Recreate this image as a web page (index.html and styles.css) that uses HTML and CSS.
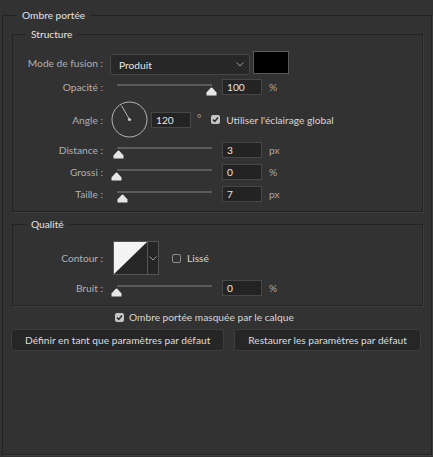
FILE: index.html
```html
<!DOCTYPE html>
<html lang="fr">
<head>
<meta charset="utf-8">
<title>Ombre portée</title>
<link rel="stylesheet" href="styles.css">
</head>
<body>
<fieldset class="group outer">
  <legend>Ombre portée</legend>

  <fieldset class="group sub structure">
    <legend>Structure</legend>

    <div class="row row-mode">
      <span class="label">Mode de fusion :</span>
      <div class="select">
        <span>Produit</span>
        <svg class="chev" width="8" height="5" viewBox="0 0 8 5"><path d="M0.5 0.5 L4 4 L7.5 0.5" fill="none" stroke="#9a9a9a" stroke-width="1"/></svg>
      </div>
      <div class="swatch"></div>
    </div>

    <div class="row row-slider gap4">
      <span class="label">Opacité :</span>
      <div class="slider"><div class="track"></div><svg class="thumb" style="left:100%" width="11" height="9" viewBox="0 0 11 9"><path d="M5.5 0.5 Q6 0.5 6.5 1 L10.5 5.5 L10.5 8.5 L0.5 8.5 L0.5 5.5 L4.5 1 Q5 0.5 5.5 0.5 Z" fill="#e6e6e6"/></svg></div>
      <div class="num">100</div>
      <span class="unit">%</span>
    </div>

    <div class="row row-angle gap6">
      <span class="label">Angle :</span>
      <svg class="dial" width="37" height="37" viewBox="0 0 37 37">
        <circle cx="18.5" cy="18.5" r="17.5" fill="none" stroke="#b4b4b4" stroke-width="1"/>
        <line x1="18.5" y1="18.5" x2="10.5" y2="4.6" stroke="#b4b4b4" stroke-width="1"/>
        <circle cx="18.5" cy="18.5" r="1.6" fill="#c8c8c8"/>
      </svg>
      <div class="num angle-num">120</div>
      <span class="unit deg">°</span>
      <span class="check global">
        <svg class="box" width="9" height="9" viewBox="0 0 9 9"><rect x="0" y="0" width="9" height="9" rx="2" fill="#c6c6c6"/><path d="M2 4.6 L3.8 6.4 L7 2.6" fill="none" stroke="#2c2c2c" stroke-width="1.5"/></svg>
        <span>Utiliser l'éclairage global</span>
      </span>
    </div>

    <div class="row row-slider gap4">
      <span class="label">Distance :</span>
      <div class="slider"><div class="track"></div><svg class="thumb" style="left:2%" width="11" height="9" viewBox="0 0 11 9"><path d="M5.5 0.5 Q6 0.5 6.5 1 L10.5 5.5 L10.5 8.5 L0.5 8.5 L0.5 5.5 L4.5 1 Q5 0.5 5.5 0.5 Z" fill="#e6e6e6"/></svg></div>
      <div class="num">3</div>
      <span class="unit">px</span>
    </div>

    <div class="row row-slider gap6">
      <span class="label">Grossi :</span>
      <div class="slider"><div class="track"></div><svg class="thumb" style="left:0%" width="11" height="9" viewBox="0 0 11 9"><path d="M5.5 0.5 Q6 0.5 6.5 1 L10.5 5.5 L10.5 8.5 L0.5 8.5 L0.5 5.5 L4.5 1 Q5 0.5 5.5 0.5 Z" fill="#e6e6e6"/></svg></div>
      <div class="num">0</div>
      <span class="unit">%</span>
    </div>

    <div class="row row-slider gap6">
      <span class="label">Taille :</span>
      <div class="slider"><div class="track"></div><svg class="thumb" style="left:6.5%" width="11" height="9" viewBox="0 0 11 9"><path d="M5.5 0.5 Q6 0.5 6.5 1 L10.5 5.5 L10.5 8.5 L0.5 8.5 L0.5 5.5 L4.5 1 Q5 0.5 5.5 0.5 Z" fill="#e6e6e6"/></svg></div>
      <div class="num">7</div>
      <span class="unit">px</span>
    </div>
  </fieldset>

  <fieldset class="group sub quality">
    <legend>Qualité</legend>

    <div class="row row-contour">
      <span class="label">Contour :</span>
      <div class="contour">
        <svg class="curve" width="33" height="32" viewBox="0 0 33 32"><rect width="33" height="32" fill="#262626"/><polygon points="0,0 33,0 0,32" fill="#f4f4f4"/></svg>
        <div class="drop"><svg width="8" height="5" viewBox="0 0 8 5"><path d="M0.5 0.5 L4 4 L7.5 0.5" fill="none" stroke="#9a9a9a" stroke-width="1"/></svg></div>
      </div>
      <span class="check lisse">
        <span class="box off"></span>
        <span>Lissé</span>
      </span>
    </div>

    <div class="row row-slider gap5">
      <span class="label">Bruit :</span>
      <div class="slider"><div class="track"></div><svg class="thumb" style="left:0%" width="11" height="9" viewBox="0 0 11 9"><path d="M5.5 0.5 Q6 0.5 6.5 1 L10.5 5.5 L10.5 8.5 L0.5 8.5 L0.5 5.5 L4.5 1 Q5 0.5 5.5 0.5 Z" fill="#e6e6e6"/></svg></div>
      <div class="num">0</div>
      <span class="unit">%</span>
    </div>
  </fieldset>

  <div class="check mask">
    <svg class="box" width="9" height="9" viewBox="0 0 9 9"><rect x="0" y="0" width="9" height="9" rx="2" fill="#c6c6c6"/><path d="M2 4.6 L3.8 6.4 L7 2.6" fill="none" stroke="#2c2c2c" stroke-width="1.5"/></svg>
    <span>Ombre portée masquée par le calque</span>
  </div>

  <div class="buttons">
    <button class="btn">Définir en tant que paramètres par défaut</button>
    <button class="btn">Restaurer les paramètres par défaut</button>
  </div>
</fieldset>
</body>
</html>
```

FILE: styles.css
```css
* { box-sizing: border-box; }

html, body {
  margin: 0;
  padding: 0;
  background: #323232;
}

body {
  width: 433px;
  height: 457px;
  overflow: hidden;
  font-family: Lato, "Liberation Sans", Arial, sans-serif;
  font-size: 10.2px;
  color: #b4b4b4;
}

.group {
  border: 1px solid #232323;
  box-shadow: 1px 1px 0 #3c3c3c;
  padding: 0;
  min-width: 0;
}

.group > legend {
  line-height: 14px;
  height: 14px;
  color: #e2e2e2;
  padding: 0 5px;
  font-size: 10.2px;
}

.outer {
  margin: 8px 1px 0 2px;
  width: 430px;
  height: 447px;
}

.outer > legend { margin-left: 14px; }

.sub {
  margin: 5px 0 0 9px;
  width: 411px;
}

.sub > legend { margin-left: 13px; }

.structure { padding: 10px 0 9px 0; }
.quality { padding: 10px 0 9px 0; }

.row {
  display: flex;
  align-items: center;
}

.gap4 { margin-top: 4px; }
.gap5 { margin-top: 5px; }
.gap6 { margin-top: 6px; }

.label {
  width: 90px;
  flex: none;
  text-align: right;
  white-space: nowrap;
  color: #b0b0b0;
}

/* Mode de fusion */
.row-mode { height: 24px; }

.select {
  margin-left: 7px;
  width: 140px;
  height: 21px;
  margin-top: 3px;
  border: 1px solid #464646;
  border-radius: 3px;
  background: #272727;
  display: flex;
  align-items: center;
  justify-content: space-between;
  padding: 0 5px 0 8px;
  color: #e6e6e6;
}

.chev { display: block; }

.swatch {
  margin-left: 3px;
  width: 36px;
  height: 23px;
  align-self: flex-start;
  background: #000;
  border: 1px solid #5a5a5a;
}

/* Sliders */
.row-slider { height: 16px; }

.slider {
  position: relative;
  margin-left: 14px;
  width: 95px;
  height: 16px;
  flex: none;
}

.track {
  margin-top: 5px;
  height: 2px;
  background: #5c5c5c;
}

.thumb {
  position: absolute;
  top: 8px;
  margin-left: -6px;
  display: block;
}

.num {
  margin-left: 10px;
  width: 40px;
  height: 16px;
  flex: none;
  border: 1px solid #464646;
  background: #232323;
  color: #e6e6e6;
  line-height: 14px;
  padding-left: 4px;
}

.unit {
  margin-left: 7px;
  color: #a8a8a8;
}

/* Angle */
.row-angle { height: 37px; }

.dial {
  margin-left: 8px;
  display: block;
  flex: none;
}

.angle-num { margin-left: 3px; }

.deg {
  margin-left: 6px;
  margin-top: -3px;
}

.check {
  display: flex;
  align-items: center;
  white-space: nowrap;
  color: #d6d6d6;
}

.check .box {
  display: block;
  flex: none;
  width: 9px;
  height: 9px;
}

.global { margin-left: 10px; }
.global .box { margin-right: 6px; }

/* Contour */
.row-contour { height: 34px; }

.contour {
  margin-left: 10px;
  display: flex;
  height: 34px;
  border: 1px solid #555555;
  flex: none;
}

.curve { display: block; }

.drop {
  width: 11px;
  border-left: 1px solid #555555;
  background: #262626;
  display: flex;
  align-items: center;
  justify-content: center;
}

.lisse { margin-left: 13px; }

.box.off {
  border: 1px solid #8c8c8c;
  border-radius: 2px;
  margin-right: 6px;
}

/* Bottom */
.mask {
  margin: 5px 0 0 112px;
  height: 12px;
}

.mask .box { margin-right: 5px; }

.buttons {
  display: flex;
  gap: 10px;
  margin: 6px 0 0 8px;
}

.btn {
  height: 22px;
  padding: 0 13px;
  border: 1px solid #3e3e3e;
  border-radius: 3px;
  background: #262626;
  color: #dcdcdc;
  font-family: Lato, "Liberation Sans", Arial, sans-serif;
  font-size: 10.2px;
  white-space: nowrap;
}
```
